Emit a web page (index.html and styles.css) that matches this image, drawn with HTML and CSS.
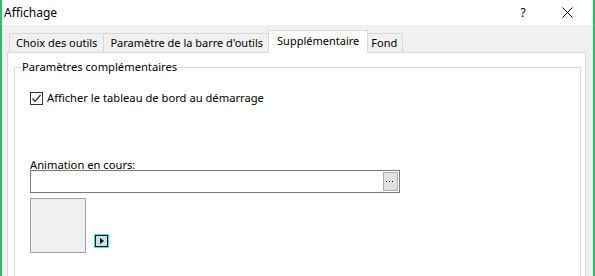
FILE: index.html
```html
<!DOCTYPE html>
<html lang="fr">
  <head>
    <meta charset="UTF-8" />
    <title>Affichage</title>
    <link rel="stylesheet" href="styles.css">
  </head>
  <body>
    <div id="window">
      <div id="titlebar">
        <span class="title">Affichage</span>
        <span class="help">?</span>
        <span class="close">
          <svg width="11" height="11" viewBox="0 0 11 11"><path d="M0.5 0.5 L10.5 10.5 M10.5 0.5 L0.5 10.5" stroke="#000" stroke-width="1" fill="none"/></svg>
        </span>
      </div>
      <div id="client">
        <ul id="tabs">
          <li>Choix des outils</li>
          <li>Paramètre de la barre d'outils</li>
          <li class="tab-sel">Supplémentaire</li>
          <li>Fond</li>
        </ul>
        <div id="page">
          <fieldset class="group">
            <legend>Paramètres complémentaires</legend>
            <div class="group-body">
              <label class="check">
                <span class="check-box">
                  <svg width="11" height="11" viewBox="0 0 11 11"><path d="M1.5 5.5 L4 8.5 L9.5 2" stroke="#333" stroke-width="1.2" fill="none"/></svg>
                </span>
                Afficher le tableau de bord au démarrage
              </label>
              <div class="anim-label">Animation en cours:</div>
              <div class="field">
                <span class="browse">
                  <svg width="13" height="17" viewBox="0 0 13 17"><rect x="2" y="8" width="1" height="1" fill="#000"/><rect x="5" y="8" width="1" height="1" fill="#000"/><rect x="8" y="8" width="1" height="1" fill="#000"/></svg>
                </span>
              </div>
              <div class="preview-row">
                <div class="preview"></div>
                <div class="play"><span class="play-tri"></span></div>
              </div>
            </div>
          </fieldset>
        </div>
      </div>
    </div>
  </body>
</html>
```

FILE: styles.css
```css
* {
  margin: 0;
  padding: 0;
  box-sizing: border-box;
}
li {
  list-style: none;
}

body {
  font-family: "Noto Sans", "Open Sans", sans-serif;
  font-size: 11.2px;
  color: #000;
  width: 595px;
  height: 276px;
  overflow: hidden;
}

#window {
  width: 595px;
  height: 276px;
  border-left: 2px solid #1fc46c;
  border-right: 2px solid #1fc46c;
  background: #f0f0f0;
  display: flex;
  flex-direction: column;
}

#titlebar {
  height: 25px;
  background: #fff;
  display: flex;
  align-items: center;
  padding-left: 2px;
  flex-shrink: 0;
  font-size: 12px;
}

#titlebar .title {
  flex: 1;
  line-height: 16px;
}

#titlebar .help {
  width: 46px;
  text-align: center;
  line-height: 16px;
  padding-left: 4px;
}

#titlebar .close {
  width: 46px;
  display: flex;
  justify-content: center;
  margin-right: 3px;
}

#tabs {
  display: flex;
  align-items: flex-end;
  padding-left: 7px;
  margin-top: 8px;
  height: 19px;
  font-size: 11px;
}

#tabs li {
  height: 19px;
  line-height: 17px;
  padding: 0 6px;
  border: 1px solid #d9d9d9;
  border-bottom: none;
  margin-left: -1px;
  background: #f0f0f0;
}

#tabs li:first-child {
  margin-left: 0;
}

#tabs li:last-child {
  padding: 0 5px;
}

#tabs .tab-sel {
  position: relative;
  z-index: 1;
  height: 23px;
  line-height: 20px;
  margin: 0 -2px -1px -2px;
  padding: 0 8px;
  background: #fff;
}

#page {
  flex: 1;
  margin: 0 7px 0 5px;
  background: #fff;
  border: 1px solid #d9d9d9;
  border-bottom: none;
}

.group {
  margin: 6px 4px 0 6px;
  padding: 0 0 20px 7px;
  border: 1px solid #dcdcdc;
  height: 230px;
}

.group legend {
  line-height: 16px;
  padding: 0;
}

.group-body {
  padding-left: 8px;
}

.check {
  display: flex;
  align-items: center;
  height: 16px;
  margin-top: 15px;
  line-height: 16px;
}

.check-box {
  width: 13px;
  height: 13px;
  border: 1px solid #333;
  background: #fff;
  margin-right: 4px;
  display: flex;
  align-items: center;
  justify-content: center;
}

.anim-label {
  line-height: 16px;
  margin-top: 51px;
  margin-bottom: -3px;
}

.field {
  width: 370px;
  height: 23px;
  border: 1px solid #7a7a7a;
  background: #fff;
  display: flex;
  justify-content: flex-end;
  padding: 1px 1px 0 0;
}

.browse {
  width: 15px;
  height: 19px;
  background: #e1e1e1;
  border: 1px solid #adadad;
  display: flex;
}

.preview-row {
  display: flex;
  align-items: flex-end;
  margin-top: 5px;
}

.preview {
  width: 56px;
  height: 55px;
  background: #f0f0f0;
  border: 1px solid #a0a0a0;
}

.play {
  width: 15px;
  height: 14px;
  margin: 0 0 5px 8px;
  border: 1px solid #00ffff;
  display: flex;
}

.play-tri {
  flex: 1;
  border: 1px solid #000;
  background: #d9d9d9;
  position: relative;
}

.play-tri::after {
  content: "";
  position: absolute;
  left: 4px;
  top: 2px;
  border-left: 4px solid #000;
  border-top: 3px solid transparent;
  border-bottom: 3px solid transparent;
}
```
